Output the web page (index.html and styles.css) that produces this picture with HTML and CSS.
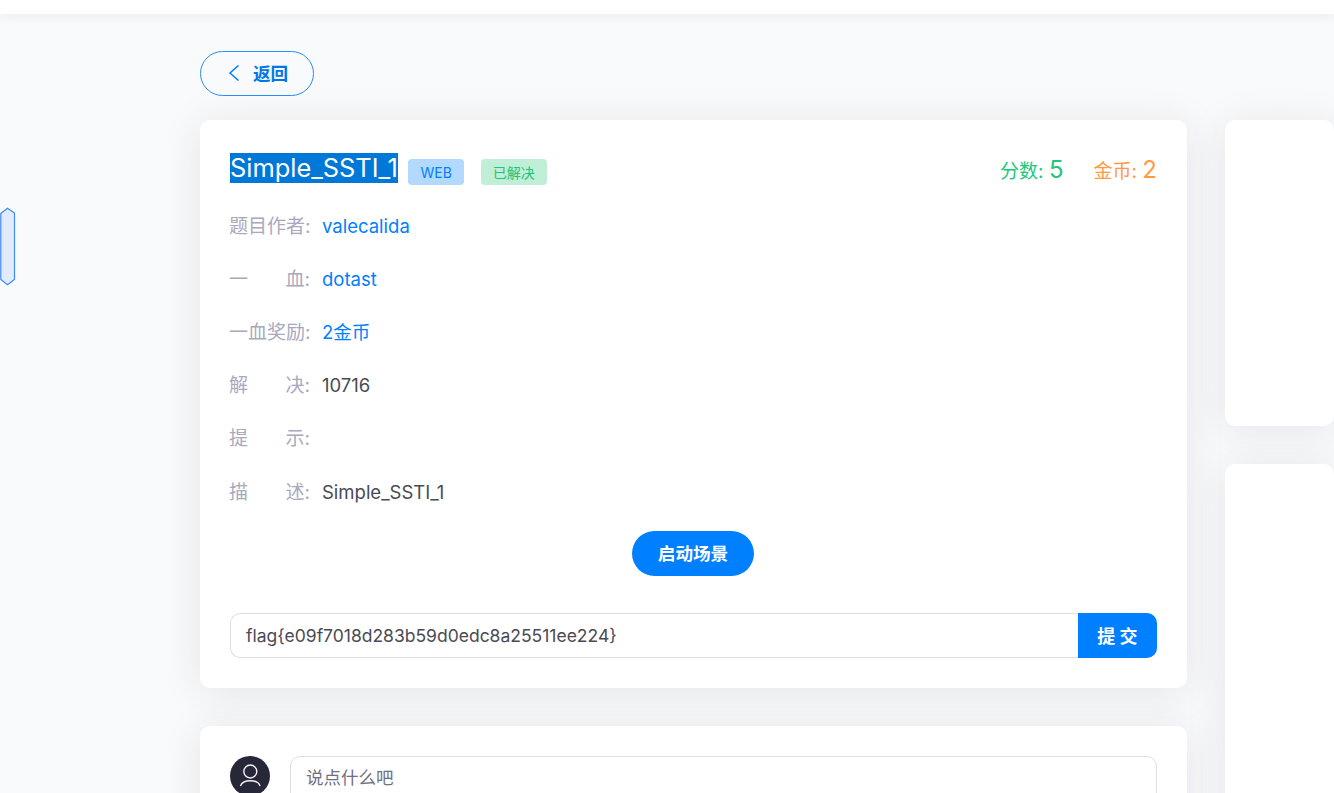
FILE: index.html
```html
<!DOCTYPE html>
<html lang="zh-CN">
<head>
<meta charset="utf-8">
<title>Simple_SSTI_1</title>
<link rel="stylesheet" href="styles.css">
</head>
<body>
<header class="topbar"></header>
<div class="side-handle"><svg width="16" height="80" viewBox="0 0 16 80"><path d="M.8 6.5 L7.5 1.2 L14.5 6 V72.5 L7.5 77.8 L.8 72.5 Z" fill="#e2ebfd" stroke="#3f88f8" stroke-width="1.2"/></svg></div>
<main class="page">
  <div class="left">
    <a class="back">
      <svg class="back-icon" width="12" height="16" viewBox="0 0 12 16"><path d="M10.5 .5 L2 8 L10.5 15.5" fill="none" stroke="#0080ff" stroke-width="1.5"/></svg>
      <span>返回</span>
    </a>
    <section class="card challenge">
      <div class="title-row">
        <h1 class="title">Simple_SSTI_1</h1>
        <span class="tag tag-web">WEB</span>
        <span class="tag tag-solved">已解决</span>
        <div class="scores">
          <span class="score green">分数: <b>5</b></span>
          <span class="score orange">金币: <b>2</b></span>
        </div>
      </div>
      <dl class="info">
        <div class="row"><dt><span>题目作者:</span></dt><dd class="link">valecalida</dd></div>
        <div class="row"><dt><span>一</span><span>血:</span></dt><dd class="link">dotast</dd></div>
        <div class="row"><dt><span>一血奖励:</span></dt><dd class="link">2金币</dd></div>
        <div class="row"><dt><span>解</span><span>决:</span></dt><dd>10716</dd></div>
        <div class="row"><dt><span>提</span><span>示:</span></dt><dd></dd></div>
        <div class="row"><dt><span>描</span><span>述:</span></dt><dd>Simple_SSTI_1</dd></div>
      </dl>
      <div class="start-wrap"><button class="start">启动场景</button></div>
      <form class="flag">
        <input class="flag-input" type="text" value="flag{e09f7018d283b59d0edc8a25511ee224}">
        <button class="flag-submit" type="button">提 交</button>
      </form>
    </section>
    <section class="card comment">
      <div class="avatar"><svg width="40" height="40" viewBox="0 0 40 40"><circle cx="20.3" cy="15.5" r="6.5" fill="none" stroke="#f2f2f4" stroke-width="1.4"/><path d="M10.5 30 C11.5 26.5 15 24.7 20.3 24.7 C25.5 24.7 29 26.5 30 30" fill="none" stroke="#f2f2f4" stroke-width="1.4"/></svg></div>
      <div class="comment-box">说点什么吧</div>
    </section>
  </div>
  <aside class="right">
    <section class="card side-a"></section>
    <section class="card side-b"></section>
  </aside>
</main>
</body>
</html>
```
FILE: styles.css
```css
* { box-sizing: border-box; }
html, body { margin: 0; height: 793px; overflow: hidden; }
body {
  background: #f9fafc;
  font-family: Inter, "Noto Sans CJK SC", sans-serif;
  color: #4a4a55;
  position: relative;
}
.topbar {
  height: 14px;
  background: #fff;
  box-shadow: 0 2px 12px rgba(30, 40, 70, .07);
}
.side-handle { position: absolute; left: 0; top: 207px; line-height: 0; }
.page {
  display: flex;
  gap: 38px;
  padding: 37px 0 0 200px;
}
.left { width: 987px; flex: none; }
.right { flex: 1; display: flex; flex-direction: column; gap: 38px; padding-top: 69px; }
.back {
  display: flex;
  align-items: center;
  gap: 13px;
  width: 114px;
  height: 45px;
  margin-bottom: 24px;
  padding: 0 0 2px 27px;
  border: 1px solid #2a8cf8;
  border-radius: 23px;
  color: #0078e8;
  font-size: 17.6px;
  font-weight: 700;
}
.card {
  background: #fff;
  border-radius: 10px;
  box-shadow: 0 4px 40px rgba(40, 40, 50, .1);
}
.challenge { height: 568px; padding: 33px 30px 0; margin-bottom: 38px; }
.title-row { display: flex; align-items: center; height: 30px; }
.title {
  margin: 0 10px 0 0;
  font-size: 25.4px;
  font-weight: 400;
  line-height: 30px;
  background: #0078d7;
  color: #fff;
}
.tag {
  display: flex;
  align-items: center;
  justify-content: center;
  height: 26px;
  margin-top: 8px;
  border-radius: 4px;
  font-size: 14px;
}
.tag-web { width: 56px; margin-right: 17px; padding-left: 1px; background: #b3d9ff; color: #0080ff; }
.tag-solved { width: 66px; background: #c0eed6; color: #1ec47a; }
.scores { margin-left: auto; display: flex; gap: 30px; margin-top: 2px; }
.score { font-size: 19px; }
.score b { font-size: 24px; font-weight: 400; }
.green { color: #22c77a; }
.orange { color: #ff9a40; }
.info { margin: 16.75px 0 0 -1px; }
.row { display: flex; height: 53.2px; align-items: baseline; padding-top: 14px; line-height: 24px; font-size: 18.5px; }
.row dt {
  display: flex;
  justify-content: space-between;
  width: 81px;
  margin-right: 12px;
  color: #a8a9bd;
  font-size: 19px;
  font-weight: 400;
  white-space: nowrap;
}
.row dd { margin: 0; }
.link { color: #0080ff; }
.start-wrap { display: flex; justify-content: center; margin-top: 12px; padding-right: 1px; }
.start {
  width: 122px;
  height: 45px;
  padding: 0 0 2px;
  border: 0;
  border-radius: 23px;
  background: #0080ff;
  color: #fff;
  font: 700 17.6px Inter, "Noto Sans CJK SC", sans-serif;
}
.flag { display: flex; margin-top: 37px; height: 45px; }
.flag-input {
  flex: 1;
  min-width: 0;
  padding: 0 15px;
  border: 1px solid #dfdfe3;
  border-right: 0;
  border-radius: 10px 0 0 10px;
  color: #4a4a55;
  font: 17.5px Inter, "Noto Sans CJK SC", sans-serif;
  outline: 0;
}
.flag-submit {
  width: 79px;
  border: 0;
  border-radius: 0 10px 10px 0;
  background: #0080ff;
  color: #fff;
  font: 700 18px Inter, "Noto Sans CJK SC", sans-serif;
}
.comment { display: flex; gap: 20px; height: 200px; padding: 30px; }
.avatar { width: 40px; height: 40px; border-radius: 50%; background: #27273a; flex: none; line-height: 0; }
.comment-box {
  flex: 1;
  height: 140px;
  padding: 7px 15px;
  border: 1px solid #dfdfe3;
  border-radius: 10px;
  font-size: 17.5px;
  color: #6f7180;
}
.side-a { height: 306px; }
.side-b { height: 500px; }
```
